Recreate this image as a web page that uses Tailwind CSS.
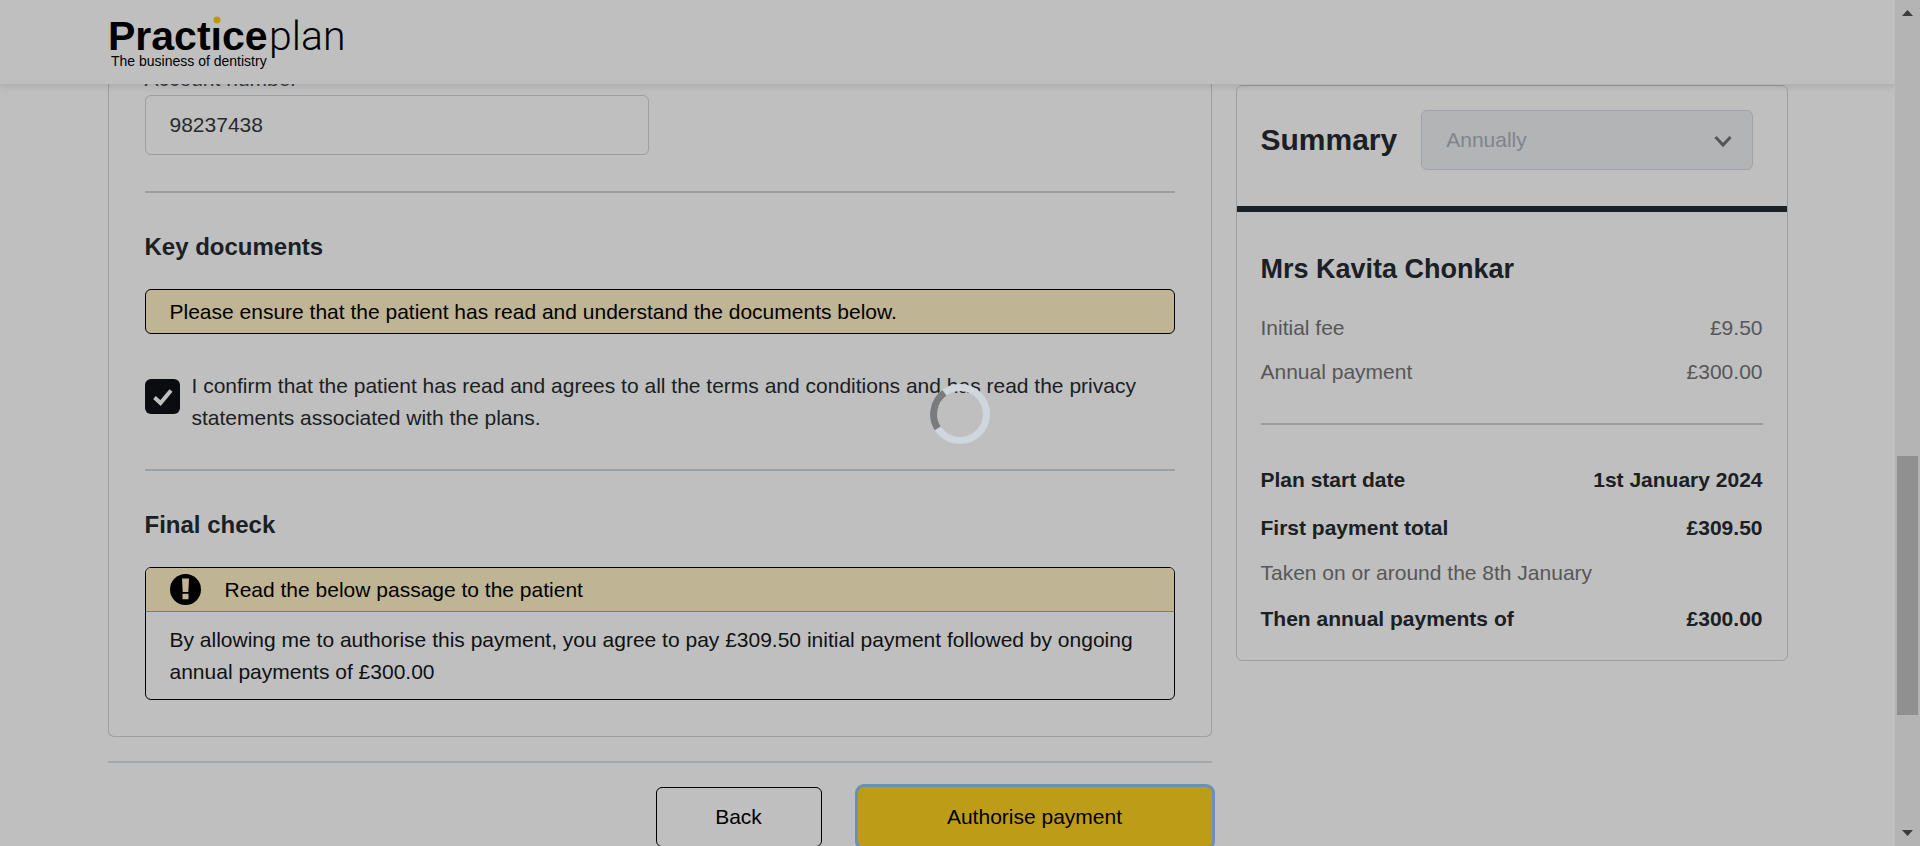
<!DOCTYPE html>
<html lang="en">
<head>
<meta charset="utf-8">
<title>Practice Plan – Authorise payment</title>
<script src="https://cdn.jsdelivr.net/npm/@tailwindcss/browser@4"></script>
</head>
<body class="h-screen overflow-hidden bg-white font-['Liberation_Sans',Arial,sans-serif] text-[21px] leading-8 text-[#262b31]">
<div class="flex h-full">
  <div class="relative min-w-0 flex-1 overflow-hidden">
    <header class="absolute inset-x-0 top-0 z-10 h-[84px] bg-white shadow-[0_2px_8px_rgba(0,0,0,0.12)]">
      <div class="mx-auto max-w-[1680px]">
        <a href="#" aria-label="Practice plan, the business of dentistry" class="block w-fit">
          <svg width="260" height="84" viewBox="0 0 260 84" class="block" font-family="'Liberation Sans', Arial, sans-serif" fill="#000">
            <text x="0" y="50" font-size="41" font-weight="700">Pract&#305;ce</text>
            <circle cx="109" cy="20" r="3.500" fill="#fdc800"/>
            <text x="161" y="50" font-size="41" font-weight="300" font-family="Roboto, 'Liberation Sans', sans-serif">plan</text>
            <text x="3" y="66" font-size="14">The business of dentistry</text>
          </svg>
        </a>
      </div>
    </header>

    <main class="mx-auto grid max-w-[1680px] grid-cols-[2fr_1fr] items-start gap-6">
      <div>
        <section class="rounded-b-md border border-t-0 border-[#ced4da] px-9 pt-[63px] pb-9">
          <label for="account" class="block text-[#495057]">Account number</label>
          <input id="account" type="text" value="98237438" class="block h-[60px] w-[49%] rounded-md border border-[#ced4da] px-6 text-[#343a40]">
          <hr class="mt-9 border-t-2 border-[#ced4da]">

          <h2 class="mt-9 text-2xl leading-9 font-bold">Key documents</h2>
          <p class="mt-6 rounded-md border border-black bg-[#fff1c4] px-6 py-[6px] leading-[31px] text-black">Please ensure that the patient has read and understand the documents below.</p>
          <div class="mt-9 flex items-start gap-3">
            <span class="relative mt-[9px] h-[35px] w-[35px] shrink-0">
              <input id="confirm" type="checkbox" checked class="block h-full w-full appearance-none rounded-md bg-[#0f1114]">
              <svg class="pointer-events-none absolute inset-0" width="35" height="35" viewBox="0 0 35 35" fill="none" stroke="#fff" stroke-width="4"><path d="M9.500 18.500 15.500 24 26 11.500"/></svg>
            </span>
            <label for="confirm">I confirm that the patient has read and agrees to all the terms and conditions and has read the privacy statements associated with the plans.</label>
          </div>
          <hr class="mt-[35px] border-t-2 border-[#ced4da]">

          <h2 class="mt-9 text-2xl leading-9 font-bold">Final check</h2>
          <div class="mt-6 overflow-hidden rounded-md border border-black">
            <div class="flex items-center gap-6 border-b border-[#e0a010] bg-[#fff1c4] px-6 py-[6px] leading-[31px] text-black">
              <svg width="31" height="31" viewBox="0 0 31 31"><circle cx="15.500" cy="15.500" r="15.500"/><path d="M12 4.500h7l-.7 13.500h-5.600zM12.500 19.700h6v5.600h-6z" fill="#fff1c4"/></svg>
              <span>Read the below passage to the patient</span>
            </div>
            <p class="px-6 pt-3 pb-[11px] text-[#14171a]">By allowing me to authorise this payment, you agree to pay £309.50 initial payment followed by ongoing annual payments of £300.00</p>
          </div>
        </section>
        <hr class="mt-6 border-t-2 border-[#dee2e6]">
        <div class="mt-6 flex justify-end gap-9">
          <button type="button" class="h-[60px] w-[166px] rounded-md border border-black text-black">Back</button>
          <button type="button" class="h-[60px] w-[354px] rounded-md bg-[#fdd120] text-black ring-3 ring-[#8fbff9]">Authorise payment</button>
        </div>
      </div>

      <aside class="mt-[85px] rounded-md border border-[#ced4da]">
        <div class="flex items-center gap-6 border-b-6 border-[#262c32] pt-6 pr-[34px] pb-9 pl-6">
          <h2 class="text-3xl font-bold"><label for="frequency">Summary</label></h2>
          <div class="relative flex-1">
            <select id="frequency" disabled class="block h-[60px] w-full appearance-none rounded-md border border-[#d5dae0] bg-[#eff0f2] px-6 text-[#a9b2bb] opacity-100"><option>Annually</option></select>
            <svg class="pointer-events-none absolute top-6 right-5" width="20" height="15" viewBox="0 0 20 15" fill="none" stroke="#737373" stroke-width="3"><path d="M2.500 3l7.500 8 7.500-8"/></svg>
          </div>
        </div>
        <div class="px-6 pt-9 pb-[25px]">
          <h3 class="text-[27px] leading-[42px] font-bold">Mrs Kavita Chonkar</h3>
          <dl class="mt-[22px] flex flex-col gap-3 text-[#757575]">
            <div class="flex justify-between"><dt>Initial fee</dt><dd>£9.50</dd></div>
            <div class="flex justify-between"><dt>Annual payment</dt><dd>£300.00</dd></div>
          </dl>
          <hr class="mt-[35px] mb-[39px] border-t-2 border-[#ced4da]">
          <dl class="font-bold">
            <div class="flex justify-between"><dt>Plan start date</dt><dd>1st January 2024</dd></div>
            <div class="mt-4 flex justify-between"><dt>First payment total</dt><dd>£309.50</dd></div>
            <div class="mt-[13px] font-normal text-[#757575]"><dt>Taken on or around the 8th January</dt></div>
            <div class="mt-[14px] flex justify-between"><dt>Then annual payments of</dt><dd>£300.00</dd></div>
          </dl>
        </div>
      </aside>
    </main>
  </div>

  <div class="flex w-[25px] shrink-0 flex-col items-center bg-[#f1f1f1]" aria-hidden="true">
    <svg width="25" height="25" viewBox="0 0 25 25" fill="#505050"><path d="M7 16l5.500-6 5.500 6z"/></svg>
    <div class="flex w-full flex-1 flex-col px-[2px]">
      <div class="flex-[431]"></div><div class="flex-[259] bg-[#c1c1c1]"></div><div class="flex-[106]"></div>
    </div>
    <svg width="25" height="25" viewBox="0 0 25 25" fill="#505050"><path d="M7 9h11l-5.500 6z"/></svg>
  </div>
</div>

<div class="fixed inset-0 z-20 flex items-center justify-center bg-black/25 pb-[18px]" role="status" aria-label="Loading">
  <svg width="60" height="60" viewBox="0 0 60 60" fill="none" stroke-width="7">
    <circle cx="30" cy="30" r="26.500" stroke="#d0d6dd"/>
    <path d="M14.400 8.800A26.500 26.500 0 0 0 7.700 44.300" stroke="#7a7b7c"/>
  </svg>
</div>
</body>
</html>
